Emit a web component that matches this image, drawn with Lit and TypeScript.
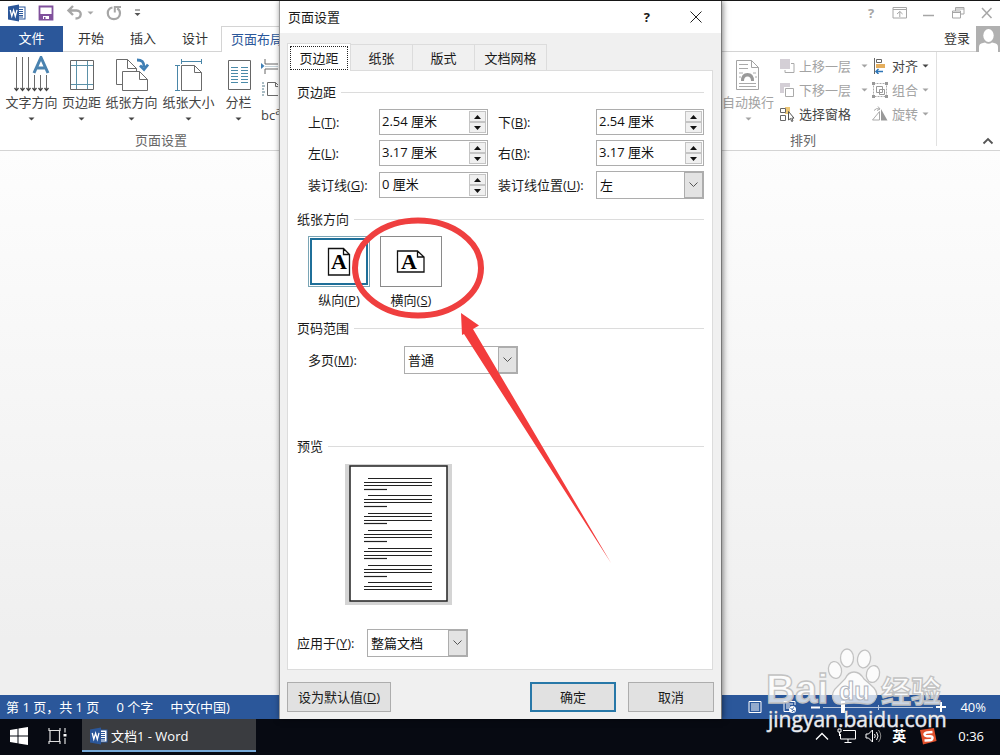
import { LitElement, html, svg, css } from "lit";
import { customElement, property } from "lit/decorators.js";

const caret = html`<svg class="caret" width="7" height="4" viewBox="0 0 7 4"><path d="M0.5 0.5h6l-3 3z" fill="currentColor"/></svg>`;

const wordLogo = html`<svg width="18" height="18" viewBox="0 0 18 18" aria-label="Word">
  <rect x="8.500" y="3" width="8.500" height="12" fill="#fff" stroke="#2b579a"/>
  <path d="M10 5.500h5M10 7.500h5M10 9.500h5M10 11.500h5M10 13h5" stroke="#2b579a"/>
  <path d="M0 2.500L11 0.500V17.500L0 15.500z" fill="#2b579a"/>
  <path d="M2.200 6l1.600 6.200L5.600 6.300L7.300 12.200L9 5.800" fill="none" stroke="#fff" stroke-width="1.300"/></svg>`;

const page = (x: number, y: number, w: number, h: number, f: number) =>
  svg`<path d="M${x} ${y}h${w - f}l${f} ${f}v${h - f}h${-w}z M${x + w - f} ${y}v${f}h${f}" fill="#fff" stroke="#6b6b6b"/>`;

const shared = css`
  :host { font: 13px/18px "Open Sans", "Noto Sans CJK SC", sans-serif; color: #333; }
  *, *::before, *::after { box-sizing: border-box; }
  button, input, select { font: inherit; color: inherit; margin: 0; padding: 0; border: 0; border-radius: 0; background: none; outline: none; }
  svg { display: block; flex: none; }
`;

@customElement("title-bar")
class TitleBar extends LitElement {
  static styles = [shared, css`
    :host { display: flex; justify-content: space-between; align-items: center; height: 25px; padding: 0 0 2px 8px; background: #fff; color: #a6a6a6; box-sizing: border-box; }
    .quick, .window { display: flex; align-items: center; }
    .quick { gap: 12px; }
    .pair { display: flex; align-items: center; gap: 4px; }
    .window { gap: 3px; }
    .window button { display: grid; place-items: center; width: 26px; }
    .dark { color: #555; }
  `];
  render() {
    return html`
      <div class="quick">
        ${wordLogo}
        <button aria-label="保存"><svg width="16" height="16" viewBox="0 0 16 16"><path d="M1.500 1.500h13v13h-13z" fill="#fff" stroke="#80519c" stroke-width="1.800"/><path d="M2 9h12v6H2z" fill="#80519c"/><path d="M5 11h6v3H7.500v-2H6v2H5z" fill="#fff"/></svg></button>
        <span class="pair">
          <button aria-label="撤消"><svg width="17" height="16" viewBox="0 0 17 16"><path d="M7 1L2.500 5.500l4.500 4.500M3 5.500h7.500c6 0 5.500 8-1 8" fill="none" stroke="#a6a6a6" stroke-width="2.400"/></svg></button>
          ${caret}
        </span>
        <button aria-label="重复"><svg width="16" height="16" viewBox="0 0 16 16"><path d="M6.500 2.500C3.500 3 1.800 5.500 1.800 8.200c0 7.800 12.200 7.800 12.200 0c0-2.200-1.200-4-2.800-5" fill="none" stroke="#a6a6a6" stroke-width="2.200"/><path d="M8.800 7.500V2H15" fill="none" stroke="#a6a6a6" stroke-width="2"/></svg></button>
        <button class="dark" aria-label="自定义快速访问工具栏"><svg width="7" height="8" viewBox="0 0 7 8"><path d="M1 1h5" stroke="#555"/><path d="M0.500 4h6L3.500 7z" fill="#555"/></svg></button>
      </div>
      <div class="window">
        <button aria-label="帮助"><b>?</b></button>
        <button aria-label="功能区显示选项"><svg width="16" height="12" viewBox="0 0 16 12"><path d="M1 .500h13.500v10.500H1zM1 2.500h13.500M7.800 10V4.500M5 7l2.800-2.500L10.600 7" fill="none" stroke="#a6a6a6"/></svg></button>
        <button aria-label="最小化"><svg width="14" height="12" viewBox="0 0 14 12"><path d="M1 8.500h11" stroke="#a6a6a6" stroke-width="1.500"/></svg></button>
        <button aria-label="还原"><svg width="13" height="12" viewBox="0 0 13 12"><path d="M.500 4h8v7h-8zM.500 5.500h8M3.500 4V.500H12V7H8.500M3.500 2H12" fill="none" stroke="#a6a6a6"/></svg></button>
        <button aria-label="关闭"><svg width="14" height="12" viewBox="0 0 14 12"><path d="M2 1l9.500 10M11.500 1L2 11" stroke="#a6a6a6" stroke-width="1.500"/></svg></button>
      </div>`;
  }
}

@customElement("tab-bar")
class TabBar extends LitElement {
  static styles = [shared, css`
    :host { display: flex; justify-content: space-between; height: 26px; background: #fff; border-bottom: 1px solid #d4d4d4; box-sizing: border-box; }
    .tabs, .account { display: flex; }
    .tabs button { width: 52px; padding-bottom: 2px; }
    .tabs .file { width: 63px; height: 26px; background: #2b579a; color: #fff; margin-right: 2px; }
    .tabs .active { width: 82px; height: 26px; background: #fff; border: 1px solid #d4d4d4; border-bottom: 0; color: #2b579a; text-align: left; padding-left: 9px; white-space: nowrap; }
    .account { gap: 6px; }
    .account button { padding-bottom: 2px; }
  `];
  render() {
    return html`
      <nav class="tabs">
        <button class="file">文件</button><button>开始</button><button>插入</button><button>设计</button><button class="active">页面布局</button>
      </nav>
      <div class="account"><button>登录</button>
        <svg width="24" height="26" viewBox="0 0 24 26"><path d="M0 0h24v26H0z" fill="#b0b0b0"/><ellipse cx="12.500" cy="9.500" rx="5.200" ry="6.500" fill="#fff"/><path d="M3 26v-5q0-3.500 4-4l2-.500q3.500 2.500 7 0l2 .500q4 .500 4 4v5z" fill="#fff"/></svg>
      </div>`;
  }
}

@customElement("ribbon-bar")
class RibbonBar extends LitElement {
  static styles = [shared, css`
    :host { display: flex; justify-content: space-between; height: 99px; background: #fff; border-bottom: 1px solid #d4d4d4; color: #444; box-sizing: border-box; }
    .group { display: flex; flex-direction: column; }
    .tools { display: flex; flex: none; height: 79px; }
    .setup { padding-left: 3px; }
    .big { display: flex; flex-direction: column; align-items: center; width: 57px; padding-top: 4px; white-space: nowrap; }
    .big.narrow { width: 43px; }
    .big span { margin-top: 1px; height: 18px; }
    .big .caret { margin-top: 6px; }
    .small { display: flex; flex-direction: column; gap: 5px; padding: 6px 0 0 1px; }
    .small span { padding-top: 4px; white-space: nowrap; }
    .small sup { line-height: 0; }
    .stack { display: flex; flex-direction: column; width: 93px; padding-top: 2px; }
    .stack button { display: flex; align-items: center; gap: 4px; height: 24px; }
    .stack .spread { margin-left: 6px; }
    .stack.last { width: 64px; }
    .name { padding-left: 132px; color: #666; height: 18px; }
    .right { display: flex; padding-right: 6px; }
    .arrange { border-right: 1px solid #e1e1e1; margin: 0 45px 4px 0; }
    .arrange .big { width: 58px; margin-right: 2px; }
    .arrange .name { padding-left: 71px; }
    .off { color: #a3a3a3; }
    .collapse { align-self: flex-end; padding-bottom: 5px; }
  `];
  render() {
    return html`
      <section class="group setup">
        <div class="tools">
          <button class="big"><svg width="36" height="36" viewBox="0 0 36 36"><path d="M2.500 1v33M8.500 1v33M14.500 1v33M20.500 19v15M26.500 19v15M32.500 19v15" stroke="#6b6b6b"/><path d="M.500 32l2 2.500 2-2.500M6.500 32l2 2.500 2-2.500M12.500 32l2 2.500 2-2.500M18.500 32l2 2.500 2-2.500M24.500 32l2 2.500 2-2.500M30.500 32l2 2.500 2-2.500" fill="none" stroke="#444" stroke-width="1.300"/><path d="M20 17L27 1.500L34 17M22.500 12h9" fill="none" stroke="#4a83b0" stroke-width="3"/></svg><span>文字方向</span>${caret}</button>
          <button class="big narrow"><svg width="26" height="36" viewBox="0 0 26 36"><path d="M1.500 4.500h23v29h-23z" fill="none" stroke="#666"/><path d="M7.500 5v28M18.500 5v28M2 9.500h22M2 28.500h22" stroke="#5b91a8"/></svg><span>页边距</span>${caret}</button>
          <button class="big"><svg width="34" height="36" viewBox="0 0 34 36">${page(1.5, 3.5, 20, 25, 9)}${page(7.5, 15.5, 25, 19, 8)}<path d="M22 4c5 0 7 2 7 7M25 9.500l4 4 4-5" fill="none" stroke="#3f7fb5" stroke-width="2.800"/></svg><span>纸张方向</span>${caret}</button>
          <button class="big"><svg width="30" height="36" viewBox="0 0 30 36">${page(7.5, 9.5, 20, 25, 7)}<path d="M7.500 5.500h20M7.500 3v5M27.500 3v5M3.500 10v24M1 9.500h5M1 34.500h5" fill="none" stroke="#4a86a8"/></svg><span>纸张大小</span>${caret}</button>
          <button class="big narrow"><svg width="24" height="36" viewBox="0 0 24 36"><path d="M1.500 4.500h22v29h-22z" fill="none" stroke="#666"/><path d="M4 11.500h7M4 14.500h7M4 17.500h7M4 20.500h7M4 23.500h7M4 26.500h7M14 11.500h7M14 14.500h7M14 17.500h7M14 20.500h7M14 23.500h7M14 26.500h7" stroke="#4a8aa8"/></svg><span>分栏</span>${caret}</button>
          <div class="small">
            <svg width="17" height="17" viewBox="0 0 17 17"><path d="M4 1v5h13M4 16v-5h13" fill="none" stroke="#666"/><path d="M0 5l3.500 3L0 11z" fill="#3f7fb5"/><path d="M4 8.500h13" stroke="#c5d3da"/></svg>
            <svg width="17" height="17" viewBox="0 0 17 17">${page(6.5, 2.5, 12, 13, 4)}<path d="M1 3h2M1 6h3M1 9h2M1 12h3M1 15h2" stroke="#557b8a"/></svg>
            <span>bc<sup>a-</sup></span>
          </div>
        </div>
        <div class="name">页面设置</div>
      </section>
      <div class="right">
        <section class="group arrange">
          <div class="tools">
            <button class="big off"><svg width="26" height="36" viewBox="0 0 26 36"><path d="M1.500 4.500h15l7 7v22h-22zM16.500 4.500v7h7" fill="#fff" stroke="#a3a3a3"/><path d="M4 8.500h9M4 12.500h9M4 30.500h17M4 27.500h17M4 17h4M18 17h3M4 21h2M20 21h2" stroke="#aaa"/><path d="M6 25q0-8 6.500-8t6.500 8h-3q0-4.500-3.500-4.500T9 25z" fill="#999"/></svg><span>自动换行</span>${caret}</button>
            <div class="stack">
              <button class="off"><svg width="16" height="16" viewBox="0 0 16 16"><path d="M1 1h10v10H1z" fill="#d4cfd6"/><path d="M12 5.500h3v9H6V12" fill="none" stroke="#aaa"/></svg>上移一层<span class="spread">${caret}</span></button>
              <button class="off"><svg width="16" height="16" viewBox="0 0 16 16"><path d="M1 1h10v4H5v6H1z" fill="#d4cfd6"/><path d="M6.500 6.500h8v8h-8z" fill="#fff" stroke="#aaa"/></svg>下移一层<span class="spread">${caret}</span></button>
              <button><svg width="16" height="16" viewBox="0 0 16 16"><path d="M6 1h5v7H6z" fill="#ecc777"/><path d="M1.500 2.500h5v4h-5zM1.500 9.500h5v5h-5z" fill="#fff" stroke="#666"/><path d="M9.500 5.500v8.500l2-1.500 1.200 3 1.300-.600-1.200-2.800h2.200z" fill="#fff" stroke="#555"/></svg>选择窗格</button>
            </div>
            <div class="stack last">
              <button><svg width="16" height="16" viewBox="0 0 16 16"><path d="M2.500 0v16" stroke="#666"/><path d="M4.500 1.500h5v3h-5z" fill="#fff" stroke="#666"/><path d="M4 6h9v4H4z" fill="#e5ae5d"/><path d="M4 13.500h7M6.500 11l-2.500 2.500L6.500 16" fill="none" stroke="#2e75b6" stroke-width="1.500"/></svg>对齐${caret}</button>
              <button class="off"><svg width="16" height="16" viewBox="0 0 16 16"><path d="M1.500 1.500h13v13h-13z" fill="none" stroke="#aaa" stroke-dasharray="2 1"/><path d="M0 0h3v3H0zM13 0h3v3h-3zM0 13h3v3H0zM13 13h3v3h-3z" fill="#999"/><path d="M4.500 4.500h6v6h-6zM7.500 7.500h5v5h-5z" fill="none" stroke="#999"/></svg>组合${caret}</button>
              <button class="off"><svg width="16" height="16" viewBox="0 0 16 16"><path d="M7.500 5.500L.500 14h7zM2 4.500q2-3 6-1.500M6 .500l2 2.500-3 1.500" fill="none" stroke="#aaa"/><path d="M9 3v11.500h6.500z" fill="#999"/></svg>旋转${caret}</button>
            </div>
          </div>
          <div class="name">排列</div>
        </section>
        <button class="collapse" aria-label="折叠功能区"><svg width="12" height="8" viewBox="0 0 12 8"><path d="M1.500 6.500L6 2l4.500 4.500" fill="none" stroke="#555" stroke-width="1.800"/></svg></button>
      </div>`;
  }
}

@customElement("spin-box")
class SpinBox extends LitElement {
  @property() value = "";
  @property() label = "";
  static styles = [shared, css`
    :host { display: flex; height: 26px; border: 1px solid #adadad; background: #fff; color: #111; padding: 1px; box-sizing: border-box; }
    input { flex: 1; min-width: 0; padding: 0 1px 2px; }
    .arrows { display: grid; grid-template-rows: 1fr 1fr; width: 17px; }
    .arrows button { display: grid; place-items: center; background: #f0f0f0; border: 1px solid #c4c4c4; }
  `];
  render() {
    return html`<input type="text" aria-label=${this.label} .value=${this.value}>
      <span class="arrows">
        <button aria-label="增加"><svg width="7" height="4" viewBox="0 0 7 4"><path d="M0 4h7L3.500 0z" fill="#111"/></svg></button>
        <button aria-label="减少"><svg width="7" height="4" viewBox="0 0 7 4"><path d="M0 0h7L3.500 4z" fill="#111"/></svg></button>
      </span>`;
  }
}

@customElement("combo-box")
class ComboBox extends LitElement {
  @property() value = "";
  @property() label = "";
  static styles = [shared, css`
    :host { display: grid; grid-template-columns: minmax(0, 1fr) 19px; height: 28px; border: 1px solid #adadad; background: #fff; color: #111; box-sizing: border-box; }
    select { grid-area: 1 / 1 / 2 / 3; appearance: none; padding: 0 22px 0 3px; width: 100%; }
    .arrow { grid-area: 1 / 2; display: grid; place-items: center; background: #e3e3e3; border: 1px solid #adadad; pointer-events: none; }
  `];
  render() {
    return html`<select aria-label=${this.label}><option>${this.value}</option></select>
      <span class="arrow"><svg width="9" height="6" viewBox="0 0 9 6"><path d="M.500 .500l4 4 4-4" fill="none" stroke="#555"/></svg></span>`;
  }
}

const key = (text: string, letter: string, tail = ":") => html`${text}(<u>${letter}</u>)${tail}`;

@customElement("page-setup")
class PageSetup extends LitElement {
  static styles = [shared, css`
    :host { display: flex; flex-direction: column; position: relative; width: 443px; box-sizing: border-box; background: #f0f0f0; border-left: 1px solid #999; border-right: 1px solid #777; box-shadow: 1px 0 6px rgba(0,0,0,.5); color: #1a1a1a; }
    header { display: flex; align-items: center; height: 33px; padding: 0 19px 0 8px; background: #fff; }
    header h1 { flex: 1; font: inherit; margin: 0; }
    header .help { margin-right: 40px; }
    .tabs { display: flex; align-items: flex-end; height: 38px; padding-left: 7px; }
    .tabs button { height: 26px; border: 1px solid #dcdcdc; border-bottom: 0; border-left: 0; width: 62px; padding-top: 1px; }
    .tabs .wide { width: 72px; }
    .tabs .active { position: relative; width: 64px; height: 28px; margin-bottom: -1px; padding: 2px; background: #fff; border-left: 1px solid #dcdcdc; }
    .tabs .active span { display: grid; place-items: center; height: 24px; border: 1px dotted #222; }
    .panel { flex: 1; display: flex; flex-direction: column; margin: 0 8px 0 7px; padding: 11px 8px 12px 9px; background: #fff; border: 1px solid #dcdcdc; }
    h2 { display: flex; align-items: center; gap: 5px; font: inherit; margin: 0; height: 20px; }
    h2::after { content: ""; flex: 1; height: 1px; background: #dcdcdc; }
    .fields { display: grid; grid-template-columns: 71px 109px 108px minmax(0, 1fr); row-gap: 5px; align-items: center; padding: 7px 0 0 11px; }
    .fields .second { padding-left: 10px; }
    .paper { margin-top: 10px; }
    .choices { display: flex; gap: 10px; padding: 7px 0 0 11px; }
    .choice { display: flex; flex-direction: column; align-items: center; gap: 4px; width: 62px; }
    .tile { display: grid; place-items: center; width: 62px; height: 51px; border: 1px solid #8a8a8a; background: #fff; }
    .chosen .tile { border-color: #7aa5b5; box-shadow: inset 0 0 0 1px #fff, inset 0 0 0 3px #1f6f99; }
    .range { margin-top: 9px; }
    .line { display: flex; align-items: center; }
    .pages { padding: 8px 0 0 11px; }
    .pages label { width: 96px; }
    .pages combo-box { width: 114px; }
    .preview { margin-top: 62px; }
    .sheet { margin: 8px 0 0 48px; }
    .apply { margin-top: 24px; }
    .apply label { width: 70px; }
    .apply combo-box { width: 101px; }
    footer { display: flex; gap: 12px; padding: 12px 7px 7px; }
    footer button { width: 86px; height: 30px; background: #e1e1e1; border: 1px solid #adadad; }
    footer .default { width: 104px; margin-right: auto; }
    footer .ok { border: 2px solid #2878a8; }
    .note { position: absolute; left: 65px; top: 210px; pointer-events: none; }
    .glyph { font: bold 22px "Liberation Serif", serif; }
    .tile svg { overflow: visible; }
  `];
  render() {
    const lines = Array.from({ length: 27 }, (_, i) => {
      const k = i % 4;
      const y = 14.5 + Math.round(Math.floor(i / 4) * 17.4 + k * 3.5);
      return svg`<path d="M${k === 0 ? 23 : 19} ${y}h${k === 0 ? 64 : k === 3 ? 23 : 68}" stroke="#222" stroke-width="1.200"/>`;
    });
    return html`
      <header><h1>页面设置</h1><button class="help" aria-label="帮助"><b>?</b></button>
        <button aria-label="关闭"><svg width="12" height="12" viewBox="0 0 12 12"><path d="M.500 .500l11 11M11.500 .500l-11 11" stroke="#222"/></svg></button></header>
      <div class="tabs"><button class="active"><span>页边距</span></button><button>纸张</button><button>版式</button><button class="wide">文档网格</button></div>
      <div class="panel">
        <h2>页边距</h2>
        <div class="fields">
          <label>${key("上", "T")}</label><spin-box label="上" value="2.54 厘米"></spin-box>
          <label class="second">${key("下", "B")}</label><spin-box label="下" value="2.54 厘米"></spin-box>
          <label>${key("左", "L")}</label><spin-box label="左" value="3.17 厘米"></spin-box>
          <label class="second">${key("右", "R")}</label><spin-box label="右" value="3.17 厘米"></spin-box>
          <label>${key("装订线", "G")}</label><spin-box label="装订线" value="0 厘米"></spin-box>
          <label class="second">${key("装订线位置", "U")}</label><combo-box label="装订线位置" value="左"></combo-box>
        </div>
        <h2 class="paper">纸张方向</h2>
        <div class="choices">
          <button class="choice chosen"><span class="tile"><svg width="24" height="28" viewBox="0 0 24 28"><path d="M1.500 .500h15l6 6v20.500h-21zM16.500 .500v6h6" fill="#fff" stroke="#111" stroke-width="1.300"/><text class="glyph" x="4" y="21">A</text></svg></span><span>${key("纵向", "P", "")}</span></button>
          <button class="choice"><span class="tile"><svg width="28" height="23" viewBox="0 0 28 23"><path d="M.500 1h20l6.500 6v15H.500zM20.500 1v6h6.500" fill="#fff" stroke="#111" stroke-width="1.300"/><text class="glyph" x="4" y="19">A</text></svg></span><span>${key("横向", "S", "")}</span></button>
        </div>
        <h2 class="range">页码范围</h2>
        <div class="line pages"><label>${key("多页", "M")}</label><combo-box label="多页" value="普通"></combo-box></div>
        <h2 class="preview">预览</h2>
        <svg class="sheet" width="107" height="141" viewBox="0 0 107 141"><path d="M0 0h107v141H0z" fill="#d4d4d4"/><path d="M5 2h97v135H5z" fill="#fff" stroke="#222" stroke-width="1.500"/>${lines}</svg>
        <div class="line apply"><label>${key("应用于", "Y")}</label><combo-box label="应用于" value="整篇文档"></combo-box></div>
      </div>
      <footer><button class="default">${key("设为默认值", "D", "")}</button><button class="ok">确定</button><button>取消</button></footer>
      <svg class="note" width="280" height="360" viewBox="345 211 280 360"><ellipse cx="418" cy="268" rx="63" ry="47.500" fill="none" stroke="#ef3f3f" stroke-width="6"/><path d="M461 313L479 325.500L473 329L611 563L464 334L462 335z" fill="#f33c3c"/></svg>`;
  }
}

@customElement("status-bar")
class StatusBar extends LitElement {
  static styles = [shared, css`
    :host { display: flex; justify-content: space-between; align-items: center; height: 24px; padding: 0 14px 0 6px; background: #2b579a; color: #fff; box-sizing: border-box; }
    .facts, .view { display: flex; align-items: center; }
    .facts { gap: 17px; }
    .view { gap: 14px; }
    .zoom { display: flex; align-items: center; gap: 3px; }
    .print { margin-right: 7px; }
    .zoom input { appearance: none; width: 110px; height: 14px; background: linear-gradient(#b9c8de, #b9c8de) center / 1px 5px no-repeat, linear-gradient(#b9c8de, #b9c8de) center / 100% 1px no-repeat; }
    .zoom input::-webkit-slider-thumb { appearance: none; width: 4px; height: 12px; background: #fff; }
  `];
  render() {
    return html`
      <div class="facts"><span>第 1 页，共 1 页</span><span>0 个字</span><span>中文(中国)</span></div>
      <div class="view">
        <button class="print" aria-label="页面视图"><svg width="14" height="12" viewBox="0 0 14 12"><path d="M1 .500h12v11H1zM3 3h8M3 5h8M3 7h8M3 9h8" fill="none" stroke="#fff"/></svg></button>
        <button aria-label="Web 版式视图"><svg width="14" height="13" viewBox="0 0 14 13"><path d="M7 10.500H1v-10h11V4M3 3h7M3 5h4M3 7h3" fill="none" stroke="#fff"/><circle cx="9.500" cy="8.500" r="3.500" fill="#fff"/><path d="M7.500 7.500l2 1 1-2M9 11l1-1.500 2 .500" fill="none" stroke="#2b579a"/></svg></button>
        <span class="zoom"><button aria-label="缩小"><svg width="9" height="9" viewBox="0 0 9 9"><path d="M0 4.500h9" stroke="#fff" stroke-width="2"/></svg></button>
          <input type="range" aria-label="显示比例" min="0" max="100" value="17">
          <button aria-label="放大"><svg width="10" height="10" viewBox="0 0 10 10"><path d="M0 5h10M5 0v10" stroke="#fff" stroke-width="2"/></svg></button></span>
        <span>40%</span>
      </div>`;
  }
}

@customElement("task-bar")
class TaskBar extends LitElement {
  static styles = [shared, css`
    :host { display: flex; justify-content: space-between; height: 36px; padding: 0 16px 3px 10px; background: #070a12; color: #fff; box-sizing: border-box; }
    .start, .tray { display: flex; align-items: center; }
    .start { gap: 20px; }
    .task { display: flex; align-items: center; gap: 3px; width: 174px; height: 33px; margin-left: -6px; padding: 3px 0 0 8px; background: #3a3c40; border-bottom: 2px solid #76a9d8; }
    .tray { gap: 8px; padding-top: 1px; }
    .ime { font-size: 14px; font-weight: 700; margin: 0 5px 0 1px; }
    .clock { margin-left: 13px; }
  `];
  render() {
    return html`
      <div class="start">
        <button aria-label="开始"><svg width="18" height="18" viewBox="0 0 18 18"><path d="M0 3l7.500-1.200v6.700H0zM8.500 1.600L18 0v8.500H8.500zM0 9.500h7.500v6.700L0 15zM8.500 9.500H18V18l-9.500-1.600z" fill="#fff"/></svg></button>
        <button aria-label="任务视图"><svg width="20" height="18" viewBox="0 0 20 18"><path d="M1 1v2.500h11V1M1 17v-2.500h11V17M2 3.500v11M11.500 3.500v11M17 1v4.500M17 11v6" fill="none" stroke="#ddd" stroke-width="1.200"/><path d="M15.500 7h3v2.500h-3z" fill="#fff"/></svg></button>
        <button class="task">${wordLogo}文档1 - Word</button>
      </div>
      <div class="tray">
        <button aria-label="显示隐藏的图标"><svg width="14" height="10" viewBox="0 0 14 10"><path d="M1 8.500l6-6 6 6" fill="none" stroke="#fff" stroke-width="1.300"/></svg></button>
        <svg width="20" height="16" viewBox="0 0 20 16"><path d="M6 2.500h12.500v8.500H3.500V6M11 11v3M7.500 14.500h7" fill="none" stroke="#fff"/><path d="M1 1h3v3H1zM2.500 4v4" fill="none" stroke="#fff"/></svg>
        <svg width="18" height="16" viewBox="0 0 18 16"><path d="M1 6h2.500L7.500 2v12L3.500 10H1zM9.500 6q1.500 2 0 4M11.500 4q3 4 0 8" fill="none" stroke="#fff"/><path d="M13.500 2q4.500 6 0 12" fill="none" stroke="#888"/></svg>
        <span class="ime">英</span>
        <svg width="18" height="18" viewBox="0 0 18 18"><path d="M1 3L15 1l2.500 13L4 17.500z" fill="#e2502b"/><path d="M13.500 5L8 5.500q-3 .500-2.500 2.200T8.500 9.200h2.500q3 0 2.500 2T11 13.200L5.500 13.500" fill="none" stroke="#fff" stroke-width="2.400"/></svg>
        <span class="clock">0:36</span>
      </div>`;
  }
}

@customElement("app-root")
class AppRoot extends LitElement {
  static styles = [shared, css`
    :host { display: block; }
    .screen { position: relative; display: flex; flex-direction: column; min-height: 100vh; overflow: hidden; background: #f4f4f4; border-top: 1px solid #161616; }
    .document { flex: 1; background: linear-gradient(#fdfdfd, #efefef 90%); }
    .overlay { position: absolute; inset: 0 0 36px; display: flex; justify-content: center; padding-left: 1px; }
    .watermark { position: absolute; right: 50px; bottom: 18px; pointer-events: none; }
    .brand { font: bold 40px "Liberation Sans", sans-serif; }
    .cn { font: bold 30px "Noto Sans CJK SC", sans-serif; }
    .du { font: bold 25px "Liberation Sans", sans-serif; }
    .site { font: 21px "Open Sans", sans-serif; }
  `];
  render() {
    return html`<div class="screen">
      <title-bar></title-bar><tab-bar></tab-bar><ribbon-bar></ribbon-bar>
      <main class="document"></main>
      <status-bar></status-bar><task-bar></task-bar>
      <div class="overlay"><page-setup></page-setup></div>
      <svg class="watermark" width="190" height="92" viewBox="0 0 190 92">
        <g fill="#fff" fill-opacity=".75" stroke="#c2c2c2" stroke-width="1.300">
          <text class="brand" x="6" y="58">Bai</text>
          <ellipse cx="75" cy="25" rx="6.500" ry="8.500" transform="rotate(-12 75 25)"/><ellipse cx="87" cy="13" rx="6.500" ry="9"/><ellipse cx="104" cy="14" rx="6.500" ry="9" transform="rotate(10 104 14)"/><ellipse cx="113" cy="29" rx="6.500" ry="8.500" transform="rotate(14 113 29)"/>
          <path d="M94 27q6 0 10 7q6 5 10 9q5 6 1 12q-3 5-9 4q-12-2-24 0q-7 1-9-5q-2-7 4-12q4-4 8-8q3-7 9-7z"/>
          <text class="cn" x="121" y="57">经验</text>
        </g>
        <text class="du" x="79" y="55" fill="#fff" stroke="#b0b4bd">du</text>
        <text class="site" x="8" y="82" fill="#fff" fill-opacity=".9" stroke="#7f899d" stroke-width="1" paint-order="stroke">jingyan.baidu.com</text>
      </svg>
    </div>`;
  }
}
